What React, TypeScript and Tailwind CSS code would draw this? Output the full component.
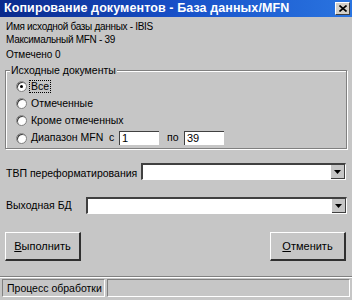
import React from "react";

function Radio({ checked }: { checked?: boolean }) {
  return (
    <span className="relative inline-block shrink-0 w-[11px] h-[11px] rounded-full bg-white border border-[#808080] shadow-[inset_1px_1px_0_#404040]">
      {checked && <span className="absolute left-[3px] top-[3px] w-[3px] h-[3px] rounded-full bg-black" />}
    </span>
  );
}

function Combo({ className }: { className: string }) {
  return (
    <div className={"flex h-[17px] bg-white border-t-2 border-l-2 border-t-[#404040] border-l-[#404040] border-b border-r border-b-white border-r-white " + className}>
      <div className="flex-1" />
      <div className="w-[14px] h-full bg-[#c6c6c6] border-r border-b border-[#404040] flex items-center justify-center">
        <svg width="7" height="4" viewBox="0 0 7 4"><path d="M0 0h7L3.5 4z" fill="#000" /></svg>
      </div>
    </div>
  );
}

function Field({ value }: { value: string }) {
  return (
    <div className="w-[40px] h-[14px] shrink-0 bg-white border-t border-l border-[#404040] pl-[2px] leading-[13px] text-[11px]">{value}</div>
  );
}

function Button({ children }: { children: React.ReactNode }) {
  return (
    <div className="w-[76px] h-[29px] flex items-center justify-center bg-[#c6c6c6] border-t border-l border-white border-r-2 border-b-2 border-r-[#303030] border-b-[#303030] text-[11px]">
      {children}
    </div>
  );
}

export default function App() {
  return (
    <div className="w-[352px] h-[300px] bg-[#c6c6c6] flex flex-col text-black text-[10.5px] overflow-hidden" style={{ fontFamily: '"Liberation Sans", Arial, sans-serif' }}>
      <div className="h-[17px] shrink-0 flex items-center justify-between pl-[4px] pr-[2px] bg-gradient-to-r from-[#0a2a8c] via-[#1850c8] to-[#2a74e0]">
        <span className="text-white font-bold text-[12.5px] tracking-[0.1px] whitespace-nowrap">Копирование документов - База данных/MFN</span>
        <div className="w-[15px] h-[13px] bg-[#d4d0c8] border-t border-l border-white border-r border-b border-r-[#404040] border-b-[#404040] flex items-center justify-center">
          <svg width="8" height="7" viewBox="0 0 8 7"><path d="M0.5 0.5L7.5 6.5M7.5 0.5L0.5 6.5" stroke="#000" strokeWidth="1.6" /></svg>
        </div>
      </div>
      <div className="flex flex-col px-[5px] pt-[3px]">
        <div className="leading-[13px] pl-[1px] text-[10px] tracking-[-0.3px]">Имя исходной базы данных - IBIS</div>
        <div className="leading-[13px] pl-[1px] text-[10px] tracking-[-0.3px]">Максимальный MFN - 39</div>
        <div className="leading-[13px] pl-[1px] mt-[2px] text-[10px]">Отмечено 0</div>
        <div className="relative mt-[9px] h-[79px] border border-[#808080] shadow-[1px_1px_0_#fff,inset_1px_1px_0_#fff] pl-[10px] pt-[9px] flex flex-col gap-[4px]">
          <span className="absolute left-[4px] -top-[7px] bg-[#c6c6c6] px-[1px] leading-[12px]">Исходные документы</span>
          <div className="flex items-center gap-[2px] h-[13px]">
            <Radio checked />
            <span className="border border-dotted border-black px-[1px] leading-[11px]">Все</span>
          </div>
          <div className="flex items-center gap-[4px] h-[13px]">
            <Radio />
            <span>Отмеченные</span>
          </div>
          <div className="flex items-center gap-[4px] h-[13px]">
            <Radio />
            <span>Кроме отмеченных</span>
          </div>
          <div className="flex items-center h-[14px]">
            <Radio />
            <span className="ml-[4px] w-[78px] shrink-0 whitespace-nowrap">Диапазон MFN</span>
            <span className="w-[10px] shrink-0">с</span>
            <Field value="1" />
            <span className="ml-[8px] w-[17px] shrink-0">по</span>
            <Field value="39" />
          </div>
        </div>
        <div className="flex items-end mt-[14px]">
          <span className="pl-[1px] w-[136px] shrink-0 whitespace-nowrap leading-[14px]">ТВП переформатирования</span>
          <Combo className="flex-1 mr-[1px]" />
        </div>
        <div className="flex items-center mt-[17px]">
          <span className="pl-[1px] w-[81px] shrink-0 whitespace-nowrap">Выходная БД</span>
          <Combo className="flex-1" />
        </div>
        <div className="flex justify-between mt-[18px] pr-[1px]">
          <Button><span><u>В</u>ыполнить</span></Button>
          <Button><span><u>О</u>тменить</span></Button>
        </div>
      </div>
      <div className="mt-auto mb-[3px] flex gap-[2px] px-[2px] pt-[2px] border-t border-[#808080] shadow-[inset_0_1px_0_#fff]">
        <div className="w-[103px] h-[18px] border border-t-[#808080] border-l-[#808080] border-b-white border-r-white pl-[4px] leading-[16px] whitespace-nowrap overflow-hidden">Процесс обработки</div>
        <div className="flex-1 h-[18px] border border-t-[#808080] border-l-[#808080] border-b-white border-r-white" />
      </div>
    </div>
  );
}
